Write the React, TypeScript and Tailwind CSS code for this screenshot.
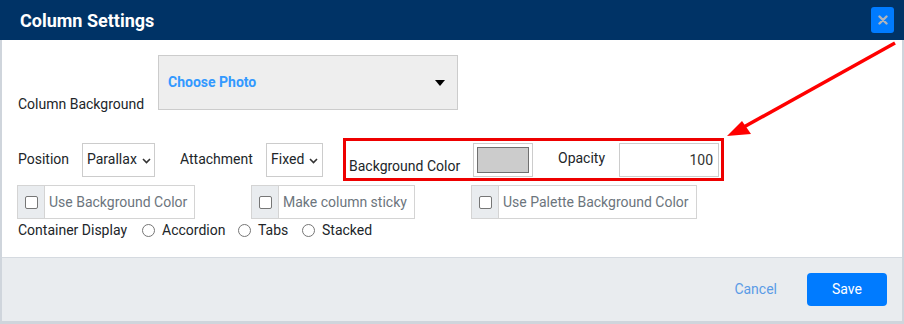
import React from "react";

const Chevron = () => (
  <svg width="9" height="6" viewBox="0 0 9 6" className="ml-[5px] mt-[2px]">
    <path d="M1 1 L4.5 4.5 L8 1" fill="none" stroke="#333" strokeWidth="1.6" />
  </svg>
);

const Check = () => (
  <span className="block w-[13px] h-[13px] rounded-[2px] border border-[#767676] bg-white" />
);

const Radio = () => (
  <span className="block w-[13px] h-[13px] rounded-full border border-[#767676] bg-white" />
);

const Group = ({ label, w }: { label: string; w: string }) => (
  <div className={`flex h-[34px] border border-[#d4d4d4] ${w}`}>
    <div className="w-[27px] bg-[#e9ecef] border-r border-[#d4d4d4] flex items-center justify-center">
      <Check />
    </div>
    <div className="flex items-center pl-[4px] text-[#6c757d] whitespace-nowrap">{label}</div>
  </div>
);

export default function App() {
  return (
    <div
      className="relative w-[904px] h-[324px] flex flex-col text-[14px] text-[#212529] overflow-hidden"
      style={{ fontFamily: "Roboto, 'Liberation Sans', sans-serif" }}
    >
      <div className="h-10 bg-[#003366] flex items-center justify-between pl-5 pr-[10px]">
        <div className="text-white font-bold text-[18px]">Column Settings</div>
        <div className="w-[23px] h-[26px] rounded-[3px] bg-[#007bff] flex items-center justify-center">
          <svg width="10" height="10" viewBox="0 0 10 10">
            <path d="M1.5 1.5 L8.5 8.5 M8.5 1.5 L1.5 8.5" stroke="#b0b4bb" strokeWidth="2.4" strokeLinecap="round" />
          </svg>
        </div>
      </div>
      <div className="flex-1 flex flex-col border-x-2 border-b-[3px] border-[#cfd5dc]">
        <div className="h-[217px] bg-white pl-4 pt-[15px]">
          <div className="flex items-end">
            <div className="w-[140px] -mb-1 leading-5">Column Background</div>
            <div className="w-[300px] h-[55px] border border-[#cccccc] bg-[#eeeeee] flex items-center justify-between pl-[9px] pr-[12px]">
              <span className="text-[#3399ff] font-bold">Choose Photo</span>
              <svg width="10" height="6" viewBox="0 0 10 6">
                <path d="M0 0 L10 0 L5 6 Z" fill="#000" />
              </svg>
            </div>
          </div>
          <div className="flex items-center mt-[28px] h-[43px]">
            <div className="w-[64px]">Position</div>
            <div className="w-[73px] h-[34px] border border-[#cccccc] flex items-center pl-[4px]">
              Parallax
              <Chevron />
            </div>
            <div className="ml-[25px] w-[86px]">Attachment</div>
            <div className="w-[57px] h-[34px] border border-[#cccccc] flex items-center pl-[4px]">
              Fixed
              <Chevron />
            </div>
            <div className="ml-[20px] w-[381px] h-[43px] border-[3px] border-[#ee0000] flex items-center pt-[2px] pb-[1px] pl-[3px] pr-[2px]">
              <div className="self-end w-[124px] leading-5 mb-[1px]">Background Color</div>
              <div className="w-[60px] h-[34px] border border-[#cccccc] p-[3px]">
                <div className="w-full h-full bg-[#cccccc] border border-[#707070]" />
              </div>
              <div className="ml-[25px] w-[61px] -mt-[3px]">Opacity</div>
              <div className="w-[100px] h-[34px] border border-[#cccccc] flex items-center justify-end pr-[5px] text-[#333]">
                100
              </div>
            </div>
          </div>
          <div className="flex mt-[4px] -ml-px gap-[56px]">
            <Group label="Use Background Color" w="w-[178px]" />
            <Group label="Make column sticky" w="w-[164px]" />
            <Group label="Use Palette Background Color" w="w-[226px]" />
          </div>
          <div className="flex items-center mt-[1px] h-5">
            <span className="w-[124px]">Container Display</span>
            <Radio />
            <span className="ml-[7px] w-[76px]">Accordion</span>
            <Radio />
            <span className="ml-[7px] w-[44px]">Tabs</span>
            <Radio />
            <span className="ml-[7px]">Stacked</span>
          </div>
        </div>
        <div className="flex-1 bg-[#e9ecef] border-t border-[#d5dae0] flex items-center justify-end pr-[15px]">
          <span className="text-[#5a9be6] mr-[30px]">Cancel</span>
          <div className="w-[80px] h-[33px] rounded-[4px] bg-[#007bff] text-white flex items-center justify-center">
            Save
          </div>
        </div>
      </div>
      <svg className="absolute left-0 top-0 pointer-events-none" width="904" height="324">
        <line x1="895" y1="43" x2="742" y2="128" stroke="#ff0000" strokeWidth="3.5" />
        <polygon points="727,136 742,121 751,134" fill="#ff0000" />
      </svg>
    </div>
  );
}
